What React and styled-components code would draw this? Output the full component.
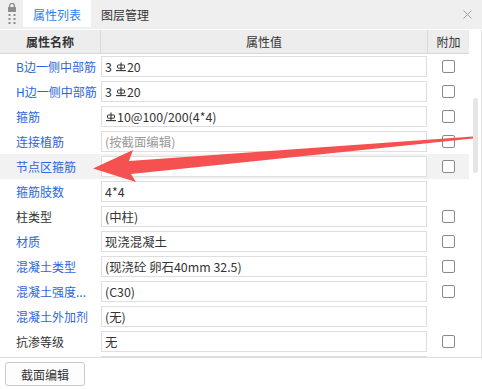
import React from "react";
import styled, { createGlobalStyle } from "styled-components";

const GlobalStyle = createGlobalStyle`
  html, body { margin: 0; padding: 0; background: #ffffff; }
  body { font-family: "Noto Sans CJK SC", "Noto Sans", sans-serif; font-size: 12px; color: #333; }
  * { box-sizing: border-box; }
`;

const Panel = styled.div`
  position: relative;
  width: 482px;
  height: 389px;
  display: flex;
  flex-direction: column;
  background: #fff;
  overflow: hidden;
`;

const TabBar = styled.div`
  height: 29px;
  flex: none;
  display: flex;
  align-items: flex-start;
  background: #efefef;
`;

const Grip = styled.div`
  width: 23px;
  height: 29px;
  display: flex;
  justify-content: center;
  padding-top: 3px;
  color: #8c8c8c;
`;

const Tab = styled.div`
  height: 27px;
  padding: 0 10px;
  display: flex;
  align-items: center;
  font-size: 12px;
  line-height: 1;
  background: ${(p) => (p.$active ? "#ffffff" : "transparent")};
  color: ${(p) => (p.$active ? "#2f7ef0" : "#333333")};
  padding-top: 2px;
`;

const Spacer = styled.div`
  flex: 1;
`;

const Close = styled.div`
  width: 30px;
  height: 29px;
  display: flex;
  align-items: center;
  justify-content: center;
  color: #a0a0a0;
`;

const Table = styled.div`
  margin-top: 1px;
  height: 328px;
  flex: none;
  display: flex;
  border-right: 1px solid #e0e0e0;
  border-bottom: 1px solid #dcdcdc;
`;

const Grid = styled.div`
  width: 469px;
  overflow: hidden;
  display: flex;
  flex-direction: column;
`;

const Track = styled.div`
  width: 12px;
  padding-left: 4px;
`;

const Thumb = styled.div`
  margin-top: 68px;
  width: 5px;
  height: 75px;
  border-radius: 3px;
  background: #e5e5e5;
`;

const HeaderRow = styled.div`
  height: 24px;
  flex: none;
  display: flex;
  background: #ededed;
  border-bottom: 1px solid #d6d6d6;
`;

const HeadCell = styled.div`
  width: ${(p) => p.$w}px;
  flex: none;
  display: flex;
  align-items: center;
  justify-content: center;
  font-weight: ${(p) => (p.$bold ? 700 : 400)};
  color: #333;
  border-right: ${(p) => (p.$sep ? "1px solid #dadada" : "none")};
  padding-bottom: 1px;
`;

const Row = styled.div`
  height: 25px;
  flex: none;
  display: flex;
  background: ${(p) => (p.$hl ? "#f2f2f2" : "transparent")};
`;

const NameCell = styled.div`
  width: 101px;
  flex: none;
  padding-left: 16px;
  display: flex;
  align-items: center;
  white-space: nowrap;
  overflow: hidden;
  color: ${(p) => (p.$link ? "#2c66dc" : "#333333")};
`;

const ValueBox = styled.div`
  width: 326px;
  height: 21px;
  margin-top: 2px;
  flex: none;
  display: flex;
  align-items: center;
  padding-left: 3px;
  background: #fff;
  border: 1px solid #dedede;
  white-space: nowrap;
  overflow: hidden;
  font-size: 12.4px;
  color: ${(p) => (p.$muted ? "#9a9a9a" : "#333333")};
`;

const CheckCell = styled.div`
  width: 42px;
  flex: none;
  display: flex;
  align-items: center;
  justify-content: center;
  padding-left: 1px;
`;

const Check = styled.div`
  width: 13px;
  height: 13px;
  border: 1px solid #8a8a8a;
  border-radius: 2px;
  background: #fff;
`;

const Footer = styled.div`
  flex: 1;
  padding: 4px 0 0 5px;
`;

const Button = styled.div`
  width: 80px;
  height: 24px;
  display: flex;
  align-items: center;
  justify-content: center;
  border: 1px solid #c9c9c9;
  border-radius: 3px;
  background: #fdfdfd;
  color: #333;
  font-size: 12px;
`;

const Overlay = styled.svg`
  position: absolute;
  left: 0;
  top: 0;
  pointer-events: none;
`;

const Sym = styled.svg`
  margin: 0 1px 0 ${(p) => (p.$lead ? 1 : 4)}px;
  flex: none;
`;

const Steel = ({ lead }) => (
  <Sym $lead={lead} width="10" height="10" viewBox="0 0 10 10" aria-label="HRB400">
    <line x1="5" y1="0.5" x2="5" y2="8.5" stroke="#333" strokeWidth="1.1" />
    <rect x="1.5" y="3" width="7" height="3.2" rx="0.6" fill="none" stroke="#333" strokeWidth="1" />
    <line x1="0" y1="8.6" x2="10" y2="8.6" stroke="#333" strokeWidth="1.1" />
  </Sym>
);

const rows = [
  { name: "B边一侧中部筋", link: true, value: ["3", "S", "20"], check: true },
  { name: "H边一侧中部筋", link: true, value: ["3", "S", "20"], check: true },
  { name: "箍筋", link: true, value: ["S", "10@100/200(4*4)"], check: true },
  { name: "连接植筋", link: true, value: ["(按截面编辑)"], muted: true, check: true },
  { name: "节点区箍筋", link: true, value: [""], check: true, hl: true },
  { name: "箍筋肢数", link: true, value: ["4*4"], check: false },
  { name: "柱类型", link: false, value: ["(中柱)"], check: true },
  { name: "材质", link: true, value: ["现浇混凝土"], check: true },
  { name: "混凝土类型", link: true, value: ["(现浇砼 卵石40mm 32.5)"], check: true },
  { name: "混凝土强度...", link: true, value: ["(C30)"], check: true },
  { name: "混凝土外加剂", link: true, value: ["(无)"], check: false },
  { name: "抗渗等级", link: false, value: ["无"], check: true },
  { name: "", link: false, value: [""], check: false },
];

export default function App() {
  return (
    <>
      <GlobalStyle />
      <Panel>
        <TabBar>
          <Grip>
            <svg width="10" height="22" viewBox="0 0 10 22">
              <path d="M2.6 4.2V2.8a2.4 2.4 0 0 1 4.8 0v1.4" fill="none" stroke="#8c8c8c" strokeWidth="1.3" />
              <rect x="1" y="4" width="8" height="5" rx="0.6" fill="#8c8c8c" />
              <rect x="1.5" y="11" width="2" height="2" fill="#8c8c8c" />
              <rect x="6.5" y="11" width="2" height="2" fill="#8c8c8c" />
              <rect x="1.5" y="15" width="2" height="2" fill="#8c8c8c" />
              <rect x="6.5" y="15" width="2" height="2" fill="#8c8c8c" />
              <rect x="1.5" y="19" width="2" height="2" fill="#8c8c8c" />
              <rect x="6.5" y="19" width="2" height="2" fill="#8c8c8c" />
            </svg>
          </Grip>
          <Tab $active>属性列表</Tab>
          <Tab>图层管理</Tab>
          <Spacer />
          <Close>
            <svg width="9" height="9" viewBox="0 0 9 9">
              <path d="M0.5 0.5L8.5 8.5M8.5 0.5L0.5 8.5" stroke="#a0a0a0" strokeWidth="1" />
            </svg>
          </Close>
        </TabBar>
        <Table>
          <Grid>
            <HeaderRow>
              <HeadCell $w={101} $sep $bold>属性名称</HeadCell>
              <HeadCell $w={327} $sep>属性值</HeadCell>
              <HeadCell $w={41}>附加</HeadCell>
            </HeaderRow>
            {rows.map((r, i) => (
              <Row key={i} $hl={r.hl}>
                <NameCell $link={r.link}>{r.name}</NameCell>
                <ValueBox $muted={r.muted}>
                  {r.value.map((v, j) =>
                    v === "S" ? <Steel key={j} lead={j === 0} /> : <span key={j}>{v}</span>
                  )}
                </ValueBox>
                <CheckCell>{r.check && <Check />}</CheckCell>
              </Row>
            ))}
          </Grid>
          <Track>
            <Thumb />
          </Track>
        </Table>
        <Footer>
          <Button>截面编辑</Button>
        </Footer>
        <Overlay width="482" height="389" viewBox="0 0 482 389">
          <polygon
            points="93,168.5 133,150 129,161 473,136.5 473,138.5 131,174 136,182"
            fill="#f65151"
          />
        </Overlay>
      </Panel>
    </>
  );
}
